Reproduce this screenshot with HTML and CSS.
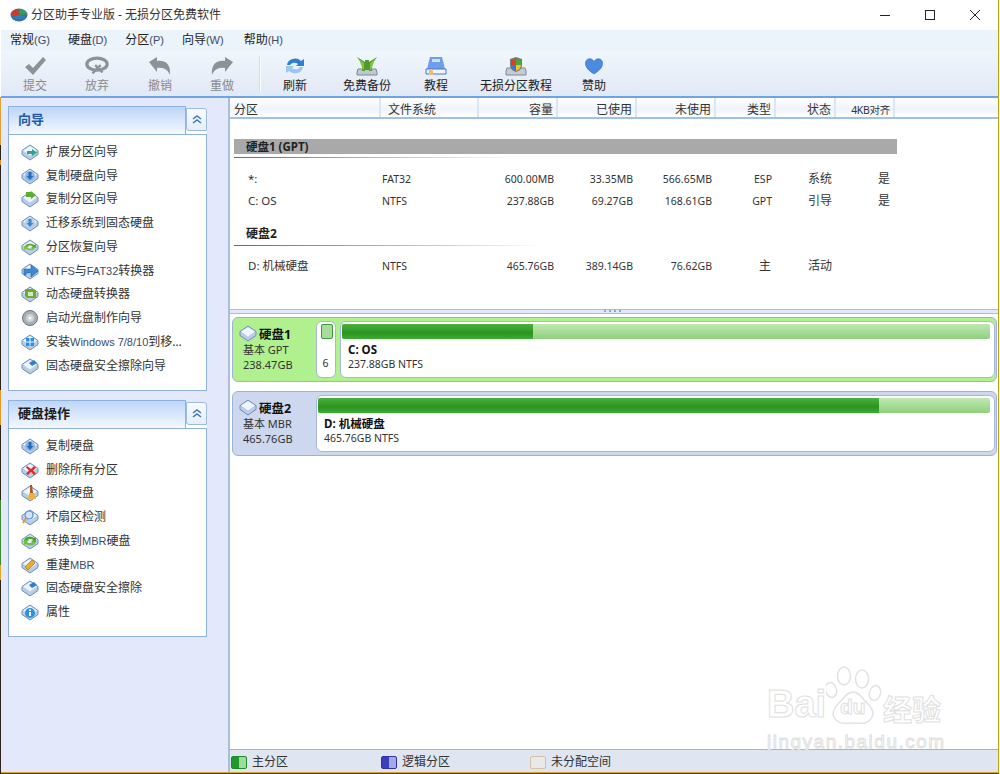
FILE: index.html
```html
<!DOCTYPE html>
<html lang="zh">
<head>
<meta charset="utf-8">
<title>分区助手专业版</title>
<link rel="stylesheet" href="styles.css">
</head>
<body>
<svg class="defs" width="0" height="0">
  <defs>
    <symbol id="disk" viewBox="0 0 18 18">
      <path d="M1 7.500 9 2l8 5.500v4L9 17l-8-5.500z" fill="#b9cde6" stroke="#6d8db8"/>
      <path d="M2 7.500 9 3l7 4.500-7 5z" fill="#eef5fc"/>
    </symbol>
  </defs>
</svg>
<div class="window">
  <header class="titlebar">
    <svg class="app-icon" viewBox="0 0 18 14"><ellipse cx="9" cy="7" rx="8.500" ry="6.500" fill="#3c6f9c"/><path d="M1 7a8 6 0 0 1 7-6l1 6z" fill="#d8352a"/><path d="M9 1a8 6 0 0 1 8 5l-7 1z" fill="#39a04a"/><path d="M3 10l6-3 7 1a8 5 0 0 1-13 2z" fill="#2d7fc0"/></svg>
    <span class="title-text">分区助手专业版 - 无损分区免费软件</span>
    <div class="win-controls">
      <svg class="win-btn" viewBox="0 0 12 12"><path d="M1 6.500h10" stroke="#222" fill="none"/></svg>
      <svg class="win-btn" viewBox="0 0 12 12"><rect x="1.500" y="1.500" width="9" height="9" stroke="#222" fill="none"/></svg>
      <svg class="win-btn" viewBox="0 0 12 12"><path d="M1 1l10 10M11 1 1 11" stroke="#222" fill="none"/></svg>
    </div>
  </header>
  <nav class="menubar">
    <span class="menu m1">常规<span class="lat">(G)</span></span>
    <span class="menu m2">硬盘<span class="lat">(D)</span></span>
    <span class="menu m3">分区<span class="lat">(P)</span></span>
    <span class="menu m4">向导<span class="lat">(W)</span></span>
    <span class="menu m5">帮助<span class="lat">(H)</span></span>
  </nav>
  <div class="toolbar">
    <div class="tool off t1"><svg viewBox="0 0 24 20"><path d="M2 11l4-3 4 4L20 1l3 3-13 15z" fill="#8d9296"/></svg><span>提交</span></div>
    <div class="tool off t2"><svg viewBox="0 0 26 20"><ellipse cx="13" cy="8" rx="11" ry="6.500" fill="none" stroke="#8d9296" stroke-width="3.500"/><path d="M8 18l9-9M11 9l8 8" stroke="#8d9296" stroke-width="2.500"/></svg><span>放弃</span></div>
    <div class="tool off t3"><svg viewBox="0 0 24 20"><path d="M1 6l8-5v4c8-1 14 3 13 14-2-5-6-8-13-7v4z" fill="#8d9296"/></svg><span>撤销</span></div>
    <div class="tool off t4"><svg viewBox="0 0 24 20"><path d="M23 6l-8-5v4C7 4 1 8 2 19c2-5 6-8 13-7v4z" fill="#8d9296"/></svg><span>重做</span></div>
    <div class="tool-sep"></div>
    <div class="tool t5"><svg viewBox="0 0 22 20"><path d="M3 9a8 7 0 0 1 14-4l3-2v7h-8l2-2a5 4 0 0 0-8 1z" fill="#2c7fd6"/><path d="M19 11a8 7 0 0 1-14 4l-3 2v-7h8l-2 2a5 4 0 0 0 8-1z" fill="#9cc6ef"/></svg><span>刷新</span></div>
    <div class="tool t6"><svg viewBox="0 0 22 20"><path d="M2 13h18l1 3v3H1v-3z" fill="#bfc7d0" stroke="#7d8a99"/><path d="M1 1l8 5v9H6V8zM21 1l-8 5v9h3V8zM9 4h4v10H9z" fill="#4f9a2c"/><path d="M3 3l5 4v7H7zM19 3l-5 4v7h1z" fill="#7fc43f"/></svg><span>免费备份</span></div>
    <div class="tool t7"><svg viewBox="0 0 22 20"><path d="M5 1h12l3 12H2z" fill="#6f9de8"/><path d="M7 3h8v3H7z" fill="#cfe0fa"/><path d="M1 13h20v5H1z" fill="#f2f5fb" stroke="#3f78d8"/><path d="M4 13h4v6H4z" fill="#f5b778"/></svg><span>教程</span></div>
    <div class="tool t8"><svg viewBox="0 0 22 20"><path d="M2 12h18l1 3v4H1v-4z" fill="#c3ccd6" stroke="#7d8a99"/><path d="M11 1l6 2v6c0 4-3 6-6 7-3-1-6-3-6-7V3z" fill="#777"/><path d="M11 3v6H6V4z" fill="#d9402c"/><path d="M11 3l5 1v5h-5z" fill="#4ea63b"/><path d="M6 9h5v6c-3-1-5-3-5-6z" fill="#3a78d6"/><path d="M11 9h5c0 3-2 5-5 6z" fill="#f0c22a"/></svg><span>无损分区教程</span></div>
    <div class="tool t9"><svg class="heart" viewBox="0 0 20 18"><path d="M10 17C4 13 1 10 1 6a4.500 4.500 0 0 1 9-1.500A4.500 4.500 0 0 1 19 6c0 4-3 7-9 11z" fill="#4a8be0" stroke="#2f6fc4" stroke-width=".6"/></svg><span>赞助</span></div>
  </div>
  <main class="main">
    <aside class="sidebar">
      <section class="panel p-wizard">
        <div class="panel-head">
          <div class="panel-tab wizard-title">向导</div>
          <div class="panel-btn"><svg viewBox="0 0 10 9"><path d="M1 4l4-3 4 3M1 8l4-3 4 3" fill="none" stroke="#3e79b8" stroke-width="1.500"/></svg></div>
        </div>
        <ul class="panel-body">
          <li><svg class="ic" viewBox="0 0 18 18"><use href="#disk"/><path d="M6 8h5V6l5 3.500-5 3.500v-2H6z" fill="#2ea38f"/></svg>扩展分区向导</li>
          <li><svg class="ic" viewBox="0 0 18 18"><use href="#disk"/><circle cx="9" cy="9" r="5" fill="#8fb6e0"/><path d="M7.500 5h3v4h2L9 13 5.500 9h2z" fill="#1f6fc0"/></svg>复制硬盘向导</li>
          <li><svg class="ic" viewBox="0 0 18 18"><use href="#disk"/><path d="M5 1h5V0l5 4-5 4V6H5z" transform="translate(0 1)" fill="#5cae2e"/></svg>复制分区向导</li>
          <li><svg class="ic" viewBox="0 0 18 18"><use href="#disk"/><circle cx="9" cy="9" r="5" fill="#b5cfe8"/><path d="M7.500 5h3v4h2L9 13 5.500 9h2z" fill="#3c86cc"/></svg>迁移系统到固态硬盘</li>
          <li><svg class="ic" viewBox="0 0 18 18"><use href="#disk"/><path d="M4 8a5 3 0 0 1 9-1l2-1v4h-5l1.500-1.500A3 2 0 0 0 6 9z" fill="#58ad36"/><path d="M14 10a5 3 0 0 1-9 1l-2 1V8h5L6.500 9.500A3 2 0 0 0 12 9z" fill="#7ec24a"/></svg>分区恢复向导</li>
          <li><svg class="ic" viewBox="0 0 18 18"><use href="#disk"/><path d="M3 7h7V3l7 6-7 6v-4H5v2H3z" fill="#3b8ad8" stroke="#1c5ea8" stroke-width=".6"/></svg><span><span class="lat">NTFS</span>与<span class="lat">FAT32</span>转换器</span></li>
          <li><svg class="ic" viewBox="0 0 18 18"><use href="#disk"/><path d="M4 4h9l2 2v7H6L4 11z" fill="#6dab2a"/><path d="M7 7h5v4H7z" fill="#d9e8b8"/></svg>动态硬盘转换器</li>
          <li><svg class="ic" viewBox="0 0 18 18"><circle cx="9" cy="9" r="7.500" fill="#a9aeb3" stroke="#6e7479"/><circle cx="9" cy="9" r="4" fill="#cfd3d6"/><circle cx="9" cy="9" r="1.500" fill="#fff"/></svg>启动光盘制作向导</li>
          <li><svg class="ic" viewBox="0 0 18 18"><use href="#disk"/><path d="M5 5h3.500v3.500H5zM9.500 5H13v3.500H9.500zM5 9.500h3.500V13H5zM9.500 9.500H13V13H9.500z" fill="#2a8fe6"/></svg><span>安装<span class="lat">Windows 7/8/10</span>到移…</span></li>
          <li><svg class="ic" viewBox="0 0 18 18"><use href="#disk"/><path d="M8 6l5-3 3 3-5 3z" fill="#2a7fd8"/></svg>固态硬盘安全擦除向导</li>
        </ul>
      </section>
      <section class="panel p-disk">
        <div class="panel-head">
          <div class="panel-tab disk-title">硬盘操作</div>
          <div class="panel-btn"><svg viewBox="0 0 10 9"><path d="M1 4l4-3 4 3M1 8l4-3 4 3" fill="none" stroke="#3e79b8" stroke-width="1.500"/></svg></div>
        </div>
        <ul class="panel-body">
          <li><svg class="ic" viewBox="0 0 18 18"><use href="#disk"/><circle cx="9" cy="9" r="5" fill="#8fb6e0"/><path d="M7.500 5h3v4h2L9 13 5.500 9h2z" fill="#1f6fc0"/></svg>复制硬盘</li>
          <li><svg class="ic" viewBox="0 0 18 18"><use href="#disk"/><path d="M6 5l4 3 3-3 2 1.500-3 3 3 3-2 1.500-3-3-3 3-2-1.500 3-3-3-3z" fill="#e02a2a"/></svg>删除所有分区</li>
          <li><svg class="ic" viewBox="0 0 18 18"><use href="#disk"/><path d="M9 1h2l1 8H9z" fill="#b0552a"/><path d="M8 9h5l2 6H7z" fill="#eeb23a"/></svg>擦除硬盘</li>
          <li><svg class="ic" viewBox="0 0 18 18"><use href="#disk"/><circle cx="8" cy="7" r="4" fill="#cfe4f7" stroke="#4f8fcf" stroke-width="1.200"/><path d="M5 10l-3 5" stroke="#e0a040" stroke-width="2"/></svg>坏扇区检测</li>
          <li><svg class="ic" viewBox="0 0 18 18"><use href="#disk"/><path d="M3 8a6 5 0 0 1 10-2l2-1v5h-5l2-2a3.500 3 0 0 0-6 1z" fill="#4aa52e"/><path d="M15 10a6 5 0 0 1-10 2l-2 1V8h5L6 10a3.500 3 0 0 0 6-1z" fill="#6cc23f"/></svg><span>转换到<span class="lat">MBR</span>硬盘</span></li>
          <li><svg class="ic" viewBox="0 0 18 18"><use href="#disk"/><path d="M4 11l7-7 3 3-7 7z" fill="#e9ad2c" stroke="#a8741a" stroke-width=".7"/></svg><span>重建<span class="lat">MBR</span></span></li>
          <li><svg class="ic" viewBox="0 0 18 18"><use href="#disk"/><path d="M8 6l5-3 3 3-5 3z" fill="#2a7fd8"/></svg>固态硬盘安全擦除</li>
          <li><svg class="ic" viewBox="0 0 18 18"><use href="#disk"/><circle cx="9" cy="10" r="5" fill="#2a93dc"/><path d="M8 9h2v4H8zM8 6.500h2v1.500H8z" fill="#fff"/></svg>属性</li>
        </ul>
      </section>
    </aside>
    <div class="content">
      <section class="list-pane">
        <div class="grid-row list-head">
          <span>分区</span>
          <span class="fs-head">文件系统</span>
          <span class="r">容量</span>
          <span class="r">已使用</span>
          <span class="r">未使用</span>
          <span class="r">类型</span>
          <span class="r">状态</span>
          <span class="small-head">4KB对齐</span>
        </div>
        <div class="disk-bar">硬盘1 (GPT)</div>
        <div class="disk-rule"></div>
        <div class="grid-row data first">
          <span class="name">*:</span><span>FAT32</span><span class="r">600.00MB</span><span class="r">33.35MB</span><span class="r">566.65MB</span><span class="r">ESP</span><span class="status">系统</span><span class="r cjk">是</span>
        </div>
        <div class="grid-row data">
          <span class="name">C: OS</span><span>NTFS</span><span class="r">237.88GB</span><span class="r">69.27GB</span><span class="r">168.61GB</span><span class="r">GPT</span><span class="status">引导</span><span class="r cjk">是</span>
        </div>
        <div class="disk-label">硬盘2</div>
        <div class="disk-rule rule2"></div>
        <div class="grid-row data first2">
          <span class="name">D: 机械硬盘</span><span>NTFS</span><span class="r">465.76GB</span><span class="r">389.14GB</span><span class="r">76.62GB</span><span class="r cjk">主</span><span class="status">活动</span><span></span>
        </div>
      </section>
      <div class="splitter"><span class="grip"></span></div>
      <section class="map-pane">
        <div class="disk-card selected">
          <div class="disk-info">
            <div class="disk-name"><svg class="ic-small" viewBox="0 0 18 18"><use href="#disk"/></svg>硬盘1</div>
            <div>基本 GPT</div>
            <div>238.47GB</div>
          </div>
          <div class="part tiny">
            <div class="tiny-bar"></div>
            <div class="tiny-num">6</div>
          </div>
          <div class="part wide">
            <div class="usage"><div class="used used-c"></div></div>
            <div class="part-name">C: OS</div>
            <div>237.88GB NTFS</div>
          </div>
        </div>
        <div class="disk-card">
          <div class="disk-info">
            <div class="disk-name"><svg class="ic-small" viewBox="0 0 18 18"><use href="#disk"/></svg>硬盘2</div>
            <div>基本 MBR</div>
            <div>465.76GB</div>
          </div>
          <div class="part wide">
            <div class="usage"><div class="used used-d"></div></div>
            <div class="part-name">D: 机械硬盘</div>
            <div>465.76GB NTFS</div>
          </div>
        </div>
      </section>
      <footer class="statusbar">
        <span class="legend l1"><i class="swatch s-green"></i>主分区</span>
        <span class="legend l2"><i class="swatch s-blue"></i>逻辑分区</span>
        <span class="legend"><i class="swatch s-empty"></i>未分配空间</span>
      </footer>
    </div>
  </main>
</div>
<div class="watermark">
  <svg class="paw" viewBox="0 0 60 62">
    <g fill="none" stroke="#e2e2e2" stroke-width="1.500">
      <ellipse cx="18" cy="10" rx="6.500" ry="9"/>
      <ellipse cx="36" cy="13" rx="6.500" ry="9"/>
      <ellipse cx="5" cy="24" rx="5.500" ry="7.500" transform="rotate(-15 5 24)"/>
      <ellipse cx="49" cy="27" rx="5.500" ry="7.500" transform="rotate(15 49 27)"/>
      <path d="M27 26c6 0 9 6 14 11 6 6 8 11 3 17-5 5-11 3-17 3s-12 2-17-3c-5-6-3-11 3-17 5-5 8-11 14-11z"/>
    </g>
  </svg>
  <span class="wm-bai">Bai</span>
  <span class="wm-du">du</span>
  <span class="wm-jy">经验</span>
  <span class="wm-url">jingyan.baidu.com</span>
</div>
</body>
</html>
```
FILE: styles.css
```css
* { box-sizing: border-box; }
html, body { margin: 0; height: 100%; }
body {
  position: relative;
  overflow: hidden;
  width: 1000px;
  height: 774px;
  font-family: "Noto Sans", "Noto Sans CJK SC", sans-serif;
  font-size: 12px;
  line-height: 16px;
  color: #222;
  background:
    linear-gradient(#fff 0 97px, #e2a030 97px 145px, #2c2414 145px 160px, #d8922a 160px 165px, #2c2414 165px 390px, #e89a20 390px 425px, #2c2414 425px 500px, #3f8a2a 500px 565px, #e8a820 565px 580px, #2c2414 580px) 0 0 / 1px 100% no-repeat,
    #fff;
}
.defs { position: absolute; }
.window {
  display: flex;
  flex-direction: column;
  width: 998px;
  height: 772px;
  margin-left: 1px;
  background: #fff;
  border-right: 1px solid #c49a10;
  box-shadow: 0 1px 0 #d8a810, 0 2px 0 #4a3a10;
}
.lat { font-family: "Liberation Sans", sans-serif; font-size: 11px; }
.menu .lat, .panel-body .lat { color: #3b4a6b; }
.titlebar { display: flex; align-items: center; height: 30px; background: #fff; flex: none; }
.app-icon { width: 18px; height: 14px; margin-left: 9px; }
.title-text { margin-left: 3px; color: #333; }
.win-controls { display: flex; margin-left: auto; margin-right: 17px; gap: 33px; }
.win-btn { width: 12px; height: 12px; }
.menubar { display: flex; align-items: center; height: 20px; background: #ebf3fb; padding-left: 9px; flex: none; }
.m1 { margin-right: 18px; }
.m2 { margin-right: 18px; }
.m3 { margin-right: 18px; }
.m4 { margin-right: 20px; }
.toolbar {
  display: flex;
  align-items: flex-start;
  height: 48px;
  background: linear-gradient(#eff6fb, #e2e9f6);
  border-bottom: 2px solid #6fa3e3;
  flex: none;
  padding-top: 6px;
  color: #222;
}
.tool { display: flex; flex-direction: column; align-items: center; flex: none; }
.tool svg { width: 24px; height: 20px; margin-bottom: 2px; }
.tool .heart { width: 20px; height: 17px; margin: 2px 0 3px; }
.tool.off { color: #8a8a8a; }
.t1 { width: 40px; margin-left: 14px; }
.t2 { width: 40px; margin-left: 22px; }
.t3 { width: 40px; margin-left: 23px; }
.t4 { width: 40px; margin-left: 22px; }
.tool-sep { width: 2px; height: 36px; margin: 0 0 0 17px; background: #d3dbe6; border-right: 1px solid #fff; flex: none; }
.t5 { width: 40px; margin-left: 14px; }
.t6 { width: 60px; margin-left: 22px; }
.t7 { width: 40px; margin-left: 19px; }
.t8 { width: 80px; margin-left: 20px; }
.t9 { width: 40px; margin-left: 18px; }
.main { display: flex; flex: 1; min-height: 0; }
.sidebar {
  width: 229px;
  flex: none;
  padding: 8px 21px 0 7px;
  background: #e3e9fb;
  border-right: 2px solid #a9bedd;
}
.panel { display: flex; flex-direction: column; }
.p-wizard { height: 285px; margin-bottom: 9px; }
.p-disk { height: 237px; }
.panel-head { display: flex; align-items: flex-start; height: 28px; flex: none; background: linear-gradient(transparent 24px, #fff 24px); }
.panel-tab {
  flex: 1;
  height: 28px;
  padding: 4px 9px;
  font-size: 13px;
  font-weight: 700;
  background: linear-gradient(#bcd6f7, #f4f8ff);
  border: 1px solid #8fb1de;
  border-bottom: 0;
}
.wizard-title { color: #2459a8; }
.disk-title { color: #1c1c1c; }
.panel-btn {
  display: flex;
  align-items: center;
  justify-content: center;
  width: 21px;
  height: 23px;
  margin-top: 2px;
  background: linear-gradient(#f8fbff, #e5eefb);
  border: 1px solid #9bbbe3;
  border-radius: 0 3px 0 3px;
}
.panel-btn svg { width: 10px; height: 9px; }
.panel-body {
  flex: 1;
  list-style: none;
  margin: 0;
  padding: 5px 0 0 12px;
  background: #fff;
  border: 1px solid #8fb1de;
  color: #333;
}
.panel-body li { display: flex; align-items: center; height: 23.75px; white-space: nowrap; }
.ic { width: 18px; height: 18px; margin-right: 7px; flex: none; }
.content { display: flex; flex-direction: column; flex: 1; min-width: 0; background: #fff; }
.list-pane { height: 211px; flex: none; background: #fff; }
.grid-row { display: grid; grid-template-columns: 151px 98px 79px 79px 79px 60px 60px 59px; }
.list-head {
  height: 21px;
  align-items: end;
  background: linear-gradient(#fff, #eef4fb 60%, #fff);
  border-bottom: 2px solid #9fc0e8;
}
.list-head span { height: 19px; padding: 4px 3px 0 4px; overflow: hidden; border-right: 2px solid #dbe6f4; white-space: nowrap; color: #333; }
.list-head .fs-head { padding-left: 7px; }
.list-head .small-head { font-size: 10.500px; text-align: right; letter-spacing: -.3px; }
.r { text-align: right; }
.disk-bar {
  width: 663px;
  height: 15px;
  margin: 20px 0 0 4px;
  padding: 0 12px;
  background: #a9a9a9;
  font-weight: 700;
  line-height: 15px;
  font-size: 11.500px;
  color: #222;
}
.disk-rule { width: 280px; height: 1px; margin: 3px 0 0 4px; background: linear-gradient(90deg, #2f78b5, #fff); }
.rule2 { width: 310px; margin-top: 3px; }
.disk-label { margin: 14px 0 0 16px; height: 16px; font-weight: 700; color: #222; }
.data { height: 22px; align-items: center; color: #333; font-size: 10.500px; }
.data span { padding-right: 4px; white-space: nowrap; }
.data span:nth-child(2) { padding-left: 1px; }
.data .cjk { font-size: 12px; padding-right: 5px; }
.first { margin-top: 10px; }
.first2 { margin-top: 9px; }
.data .name { padding-left: 18px; font-size: 11.500px; }
.data .status { padding-left: 32px; font-size: 12px; }
.splitter { display: flex; justify-content: center; height: 5px; background: #e3e9fb; border-top: 1px solid #a9bedd; border-bottom: 1px solid #a9bedd; flex: none; }
.grip { width: 20px; height: 2px; background: repeating-linear-gradient(90deg, #8da9cc 0 2px, transparent 2px 5px); }
.map-pane { flex: 1; padding: 3px 1px 0 2px; min-height: 0; }
.disk-card {
  display: flex;
  height: 65px;
  margin-bottom: 9px;
  padding: 3px 1px 3px 0;
  gap: 4px;
  background: #cdd8ef;
  border: 1px solid #9cb2d9;
  border-radius: 6px;
}
.selected { background: #b0f08e; }
.disk-info { width: 79px; flex: none; padding: 6px 0 0 10px; line-height: 15px; font-size: 11px; color: #333; white-space: nowrap; }
.disk-name { display: flex; align-items: center; margin-left: -4px; font-weight: 700; font-size: 12.500px; color: #111; }
.ic-small { width: 18px; height: 18px; margin-right: 2px; margin-top: -3px; }
.part {
  background: #fff;
  border: 1.500px solid #a5b7dc;
  border-radius: 6px;
  padding: 2px 3px;
  font-size: 10.500px;
  line-height: 14px;
  color: #333;
}
.tiny { width: 20px; flex: none; }
.wide { flex: 1; padding: 2px 4px 0 1px; }
.tiny-bar { width: 12px; height: 15px; background: #a8dc9c; border: 1px solid #3a9a3a; border-radius: 2px; margin-left: 1px; }
.tiny-num { margin-top: 17px; text-align: center; margin-left: -1px; }
.usage { height: 15px; background: linear-gradient(#bfe8b0, #8fd07e); border-radius: 2px; }
.used { height: 15px; background: linear-gradient(#4cb03c, #2a9420 60%, #3cae32); border-radius: 2px 0 0 2px; }
.used-c { width: 29.400%; }
.used-d { width: 83.500%; }
.part-name { margin: 4px 0 0 6px; font-weight: 700; font-size: 11.500px; color: #111; }
.part-name + div { margin-left: 6px; }
.statusbar {
  display: flex;
  align-items: center;
  height: 23px;
  flex: none;
  padding: 2px 0 0 1px;
  background: #dfe5f1;
  border-top: 1px solid #8fb8e4;
  color: #333;
}
.legend { display: flex; align-items: center; }
.l1 { width: 150px; }
.l2 { width: 149px; }
.swatch { width: 16px; height: 13px; margin-right: 5px; border-radius: 2px; }
.s-green { background: linear-gradient(90deg, #1f9a2a 50%, #9fdc9a 50%); border: 1px solid #1f8a2a; }
.s-blue { background: linear-gradient(90deg, #3a3fc0 50%, #a6a9e8 50%); border: 1px solid #2d32a8; }
.s-empty { background: #e9e9e9; border: 1px solid #d2c3a4; }
.watermark { position: absolute; left: 767px; top: 666px; width: 180px; height: 90px; pointer-events: none; }
.paw { position: absolute; left: 59px; top: 0; width: 60px; height: 62px; }
.watermark span {
  position: absolute;
  color: rgba(255, 255, 255, .7);
  -webkit-text-stroke: 1px #e0e0e0;
  font-family: "Liberation Sans", sans-serif;
  font-weight: 700;
  white-space: nowrap;
}
.wm-bai { left: 0; top: 18px; font-size: 38px; line-height: 40px; }
.wm-du { left: 73px; top: 28px; font-size: 21px; line-height: 26px; }
.watermark .wm-jy { left: 116px; top: 26px; font-size: 29px; line-height: 32px; font-family: "Noto Sans CJK SC", sans-serif; }
.watermark .wm-url { left: 0; top: 65px; font-size: 19px; line-height: 22px; font-weight: 400; letter-spacing: 1.500px; }
```
